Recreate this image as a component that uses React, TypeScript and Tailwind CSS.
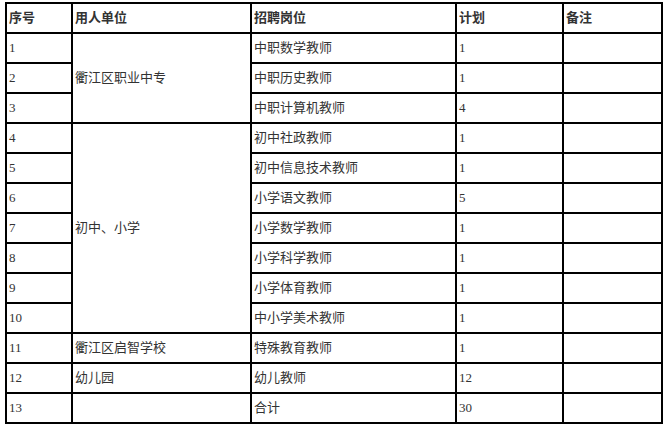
import React from "react";

type Row = {
  no: string;
  unit?: { name: string; span: number };
  post: string;
  plan: string;
};

const rows: Row[] = [
  { no: "1", unit: { name: "衢江区职业中专", span: 3 }, post: "中职数学教师", plan: "1" },
  { no: "2", post: "中职历史教师", plan: "1" },
  { no: "3", post: "中职计算机教师", plan: "4" },
  { no: "4", unit: { name: "初中、小学", span: 7 }, post: "初中社政教师", plan: "1" },
  { no: "5", post: "初中信息技术教师", plan: "1" },
  { no: "6", post: "小学语文教师", plan: "5" },
  { no: "7", post: "小学数学教师", plan: "1" },
  { no: "8", post: "小学科学教师", plan: "1" },
  { no: "9", post: "小学体育教师", plan: "1" },
  { no: "10", post: "中小学美术教师", plan: "1" },
  { no: "11", unit: { name: "衢江区启智学校", span: 1 }, post: "特殊教育教师", plan: "1" },
  { no: "12", unit: { name: "幼儿园", span: 1 }, post: "幼儿教师", plan: "12" },
  { no: "13", unit: { name: "", span: 1 }, post: "合计", plan: "30" }
];

const cell = "border-2 border-black px-[2px] align-middle text-left";

export default function App() {
  return (
    <div className="min-h-[430px] w-[668px] bg-white pl-[5px] pt-[2px] text-[13px] leading-[18px] text-[#333] [font-family:'Liberation_Serif','Noto_Sans_CJK_SC',serif]">
      <table className="w-[656px] table-fixed border-collapse">
        <colgroup>
          <col className="w-[66px]" />
          <col className="w-[179px]" />
          <col className="w-[205px]" />
          <col className="w-[107px]" />
          <col className="w-[99px]" />
        </colgroup>
        <thead>
          <tr className="h-[30px] font-bold">
            <th className={cell}>序号</th>
            <th className={cell}>用人单位</th>
            <th className={cell}>招聘岗位</th>
            <th className={cell}>计划</th>
            <th className={cell}>备注</th>
          </tr>
        </thead>
        <tbody>
          {rows.map((r) => (
            <tr key={r.no} className="h-[30px]">
              <td className={cell}>{r.no}</td>
              {r.unit && (
                <td className={cell} rowSpan={r.unit.span}>
                  {r.unit.name}
                </td>
              )}
              <td className={cell}>{r.post}</td>
              <td className={cell}>{r.plan}</td>
              <td className={cell}></td>
            </tr>
          ))}
        </tbody>
      </table>
    </div>
  );
}
